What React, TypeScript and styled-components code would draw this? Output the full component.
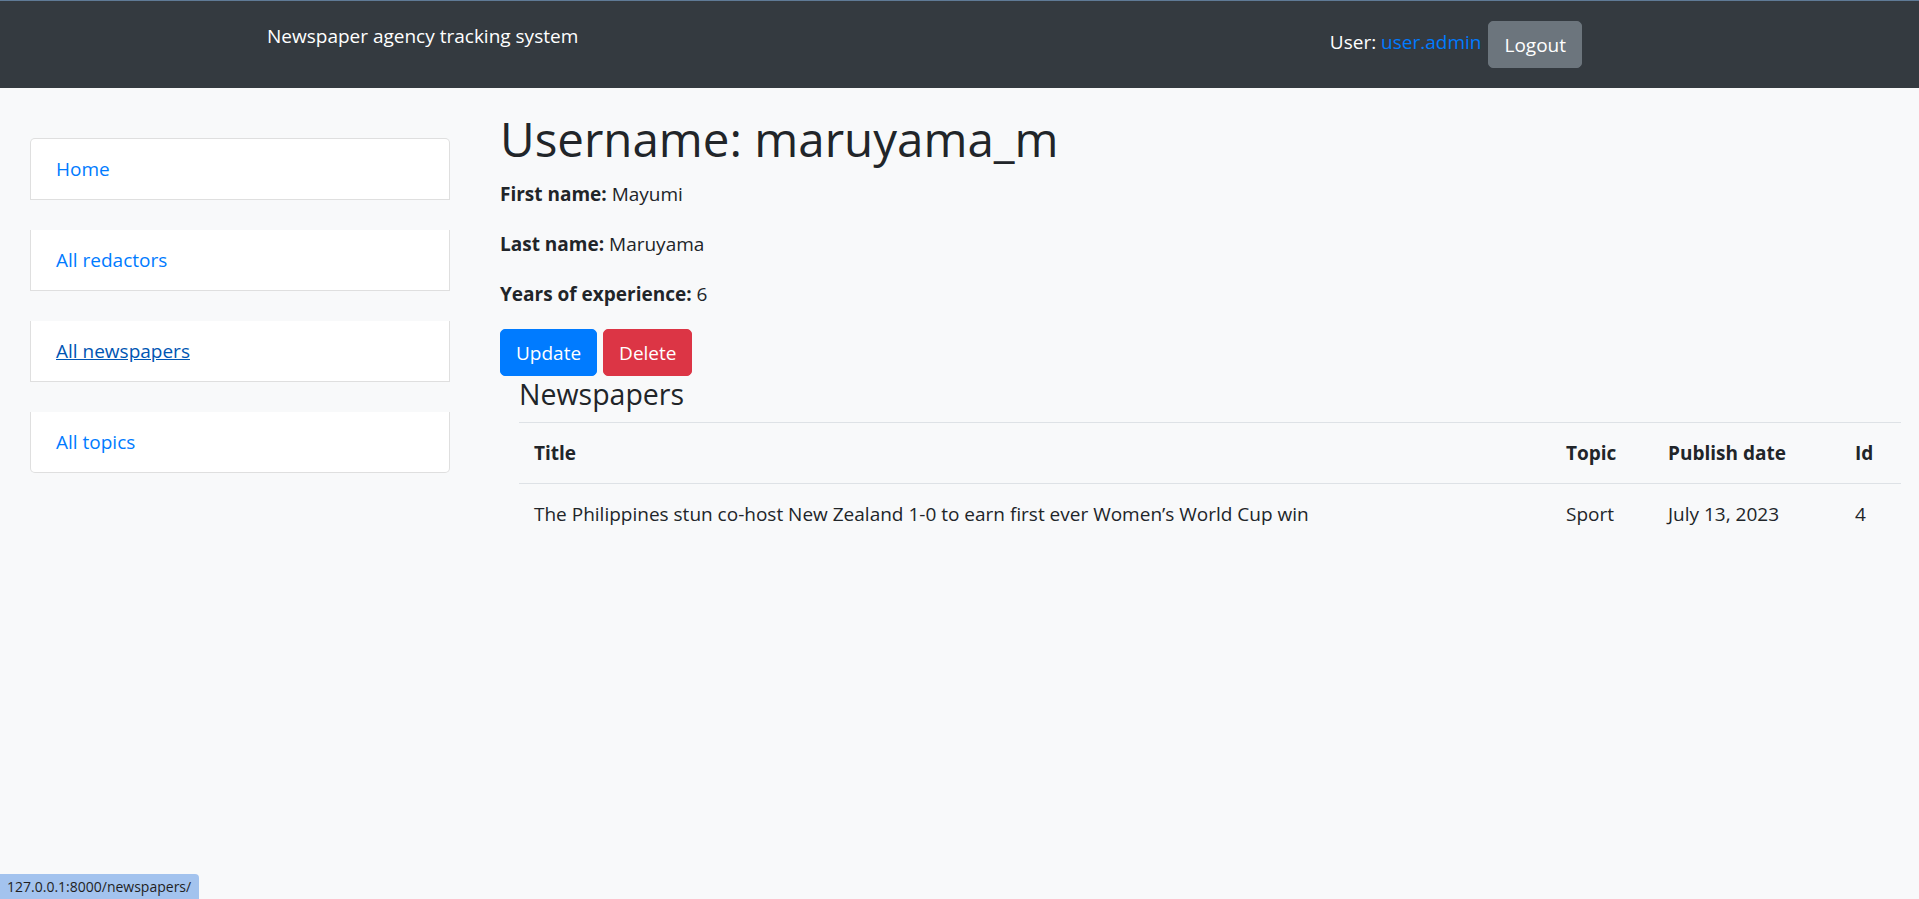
import React from "react";
import styled, { createGlobalStyle, css } from "styled-components";

const GlobalStyle = createGlobalStyle`
  html, body {
    margin: 0;
    padding: 0;
    background: #f8f9fa;
  }
  body {
    font-family: "Open Sans", "Noto Sans", sans-serif;
    font-size: 19px;
    line-height: 30px;
    color: #212529;
    min-height: 899px;
  }
  * { box-sizing: border-box; }
`;

const NavBar = styled.header`
  height: 88px;
  background: #343a40;
  border-top: 1px solid #5f7a96;
`;

const NavInner = styled.div`
  width: 1425px;
  margin: 0 auto;
  padding: 20px 90px 0 20px;
  display: flex;
  align-items: flex-start;
`;

const Brand = styled.a`
  color: #ffffff;
  font-size: 19px;
  line-height: 30px;
  text-decoration: none;
`;

const UserArea = styled.div`
  margin-left: auto;
  display: flex;
  align-items: flex-start;
  gap: 7px;
`;

const UserText = styled.span`
  margin-top: 6px;
  color: #ffffff;
  line-height: 30px;
`;

const UserLink = styled.a`
  color: #007bff;
  text-decoration: none;
`;

const Btn = styled.button<{ $variant: "primary" | "danger" | "secondary" }>`
  font-family: inherit;
  font-size: 19px;
  line-height: 30px;
  padding: 7.5px 15px;
  border-radius: 5px;
  color: #ffffff;
  cursor: pointer;
  border: 1px solid transparent;
  ${({ $variant }) =>
    $variant === "primary"
      ? css`background: #007bff; border-color: #007bff;`
      : $variant === "danger"
      ? css`background: #dc3545; border-color: #dc3545;`
      : css`background: #6c757d; border-color: #6c757d;`}
`;

const Main = styled.main`
  display: flex;
  align-items: flex-start;
  padding: 21px 0 0 30px;
`;

const Sidebar = styled.nav`
  width: 420px;
  flex-shrink: 0;
  margin-top: 29px;
  display: flex;
  flex-direction: column;
  gap: 30px;
`;

const NavItem = styled.div<{ $first?: boolean; $last?: boolean }>`
  background: #ffffff;
  border: 1px solid rgba(0, 0, 0, 0.125);
  padding: 15px 25px;
  line-height: 30px;
  ${({ $first }) =>
    $first
      ? css`border-top-left-radius: 5px; border-top-right-radius: 5px;`
      : css`border-top-width: 0;`}
  ${({ $last }) =>
    $last && css`border-bottom-left-radius: 5px; border-bottom-right-radius: 5px;`}
`;

const SideLink = styled.a<{ $hover?: boolean }>`
  color: ${({ $hover }) => ($hover ? "#0056b3" : "#007bff")};
  text-decoration: ${({ $hover }) => ($hover ? "underline" : "none")};
`;

const Content = styled.section`
  flex: 1;
  min-width: 0;
  margin-left: 50px;
`;

const Title = styled.h1`
  font-size: 47.5px;
  font-weight: 500;
  line-height: 60px;
  margin: 0 0 10px;
`;

const Detail = styled.p`
  margin: 0 0 20px;
  line-height: 30px;
  strong { font-weight: 700; }
`;

const Actions = styled.div`
  display: flex;
  gap: 6px;
`;

const Section = styled.div`
  padding: 0 18px 0 19px;
`;

const SectionTitle = styled.h4`
  font-size: 28.5px;
  font-weight: 500;
  line-height: 36px;
  margin: 0 0 10px;
`;

const Table = styled.table`
  width: 100%;
  border-collapse: collapse;
  table-layout: fixed;
`;

const Th = styled.th<{ $w?: number }>`
  text-align: left;
  font-weight: 700;
  padding: 15px;
  line-height: 30px;
  border-top: 1px solid #dee2e6;
  vertical-align: top;
  ${({ $w }) => ($w ? css`width: ${$w}px;` : "")}
`;

const Td = styled.td`
  padding: 15px;
  line-height: 30px;
  border-top: 1px solid #dee2e6;
  vertical-align: top;
  white-space: nowrap;
`;

const StatusBubble = styled.div`
  position: fixed;
  left: 0;
  bottom: 0;
  height: 25px;
  padding: 0 8px 0 7px;
  background: #a3c3ee;
  border-top-right-radius: 4px;
  color: #1f1f1f;
  font-size: 14px;
  line-height: 26px;
`;

const navLinks = [
  { label: "Home" },
  { label: "All redactors" },
  { label: "All newspapers", hover: true },
  { label: "All topics" },
];

export default function App() {
  return (
    <>
      <GlobalStyle />
      <NavBar>
        <NavInner>
          <Brand href="#">Newspaper agency tracking system</Brand>
          <UserArea>
            <UserText>
              User: <UserLink href="#">user.admin</UserLink>
            </UserText>
            <Btn $variant="secondary">Logout</Btn>
          </UserArea>
        </NavInner>
      </NavBar>
      <Main>
        <Sidebar>
          {navLinks.map((l, i) => (
            <NavItem key={l.label} $first={i === 0} $last={i === navLinks.length - 1}>
              <SideLink href="#" $hover={l.hover}>
                {l.label}
              </SideLink>
            </NavItem>
          ))}
        </Sidebar>
        <Content>
          <Title>Username: maruyama_m</Title>
          <Detail>
            <strong>First name:</strong> Mayumi
          </Detail>
          <Detail>
            <strong>Last name:</strong> Maruyama
          </Detail>
          <Detail>
            <strong>Years of experience:</strong> 6
          </Detail>
          <Actions>
            <Btn $variant="primary">Update</Btn>
            <Btn $variant="danger">Delete</Btn>
          </Actions>
          <Section>
            <SectionTitle>Newspapers</SectionTitle>
            <Table>
              <tbody>
                <tr>
                  <Th>Title</Th>
                  <Th $w={102}>Topic</Th>
                  <Th $w={187}>Publish date</Th>
                  <Th $w={61}>Id</Th>
                </tr>
                <tr>
                  <Td>The Philippines stun co-host New Zealand 1-0 to earn first ever Women’s World Cup win</Td>
                  <Td>Sport</Td>
                  <Td>July 13, 2023</Td>
                  <Td>4</Td>
                </tr>
              </tbody>
            </Table>
          </Section>
        </Content>
      </Main>
      <StatusBubble>127.0.0.1:8000/newspapers/</StatusBubble>
    </>
  );
}
